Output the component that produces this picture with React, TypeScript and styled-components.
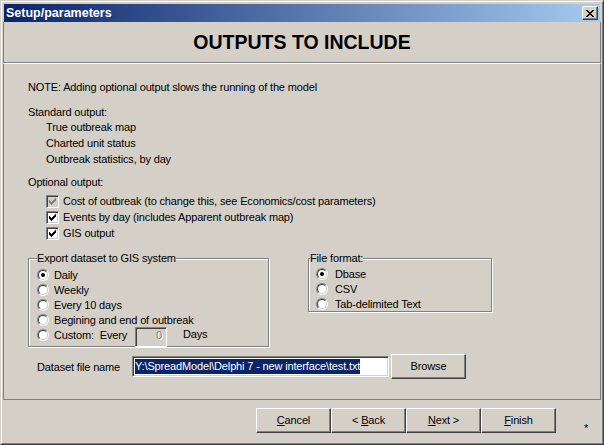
import React from 'react';
import styled, { createGlobalStyle } from 'styled-components';

const Global = createGlobalStyle`
  html, body { margin: 0; padding: 0; background: #d4d0c8; }
  body {
    font-family: "Liberation Sans", Arial, sans-serif;
    font-size: 11px;
    letter-spacing: -0.15px;
    color: #000;
  }
  * { box-sizing: border-box; }
`;

const Window = styled.div`
  width: 604px;
  height: 445px;
  border: 1px solid;
  border-color: #d4d0c8 #404040 #404040 #d4d0c8;
  background: #d4d0c8;
`;

const WindowInner = styled.div`
  height: 100%;
  border: 1px solid;
  border-color: #fff #808080 #808080 #fff;
  padding: 1px;
  display: flex;
  flex-direction: column;
`;

const TitleBar = styled.div`
  margin: 1px 1px 0;
  height: 18px;
  flex: none;
  background: linear-gradient(to right, #0a246a, #a6caf0);
  display: flex;
  align-items: center;
  justify-content: space-between;
  padding: 0 2px 0 2px;
`;

const TitleText = styled.span`
  color: #fff;
  font-weight: bold;
  font-size: 12.5px;
  letter-spacing: 0;
`;

const CloseButton = styled.div`
  width: 16px;
  height: 14px;
  border: 1px solid;
  border-color: #fff #404040 #404040 #fff;
  box-shadow: inset -1px -1px #808080;
  background: #d4d0c8;
  display: flex;
  align-items: center;
  justify-content: center;
  padding-right: 1px;
`;

const Header = styled.div`
  height: 41px;
  flex: none;
  border: 1px solid #808080;
  border-top: none;
  display: flex;
  align-items: center;
  justify-content: center;
`;

const HeaderTitle = styled.h1`
  margin: 0;
  font-size: 19.5px;
  font-weight: bold;
  letter-spacing: 0;
  line-height: 22px;
`;

const Main = styled.div`
  height: 337px;
  flex: none;
  border: 1px solid;
  border-color: #fff #808080 #808080 #808080;
  padding: 16px 24px 0;
  display: flex;
  flex-direction: column;
`;

const Line = styled.div<{ $top?: number; $indent?: number; $lh?: number }>`
  line-height: ${p => p.$lh ?? 14}px;
  margin-top: ${p => p.$top ?? 0}px;
  padding-left: ${p => p.$indent ?? 0}px;
  white-space: nowrap;
`;

const CheckRow = styled.div<{ $top?: number }>`
  height: 16px;
  margin-top: ${p => p.$top ?? 0}px;
  padding-left: 18px;
  display: flex;
  align-items: center;
  gap: 4px;
  white-space: nowrap;
`;

const CheckBoxFrame = styled.span<{ $disabled?: boolean }>`
  width: 13px;
  height: 13px;
  flex: none;
  border: 1px solid;
  border-color: #808080 #fff #fff #808080;
  box-shadow: inset 1px 1px #404040, inset -1px -1px #d4d0c8;
  background: ${p => (p.$disabled ? '#d4d0c8' : '#fff')};
  display: block;
`;

const checkCols: Array<[number, number]> = [
  [3, 5], [4, 6], [5, 7], [6, 6], [7, 5], [8, 4], [9, 3],
];

const CheckBox: React.FC<{ disabled?: boolean }> = ({ disabled }) => (
  <CheckBoxFrame $disabled={disabled}>
    <svg width="11" height="11" viewBox="0 0 11 11" style={{ display: 'block' }}>
      {checkCols.map(([c, t]) => (
        <rect key={c} x={c - 1} y={t - 1} width="1" height="3" fill={disabled ? '#808080' : '#000'} />
      ))}
    </svg>
  </CheckBoxFrame>
);

const GroupsRow = styled.div`
  display: flex;
  align-items: flex-start;
  margin-top: 17px;
`;

const GroupBox = styled.div<{ $w: number; $h: number; $ml?: number }>`
  width: ${p => p.$w}px;
  height: ${p => p.$h}px;
  margin-left: ${p => p.$ml ?? 0}px;
  flex: none;
  border: 1px solid #808080;
  box-shadow: inset 1px 1px #fff, 1px 1px #fff;
  display: flex;
  flex-direction: column;
  align-items: flex-start;
`;

const Legend = styled.div<{ $ml: number }>`
  margin-top: -8px;
  margin-left: ${p => p.$ml}px;
  line-height: 14px;
  background: #d4d0c8;
  white-space: nowrap;
`;

const RadioList = styled.div<{ $top: number }>`
  margin-top: ${p => p.$top}px;
  display: flex;
  flex-direction: column;
`;

const RadioRow = styled.div<{ $pad: number; $gap: number }>`
  height: 15px;
  padding-left: ${p => p.$pad}px;
  display: flex;
  align-items: center;
  gap: ${p => p.$gap}px;
  white-space: nowrap;
`;

const RadioOuter = styled.span`
  width: 12px;
  height: 12px;
  flex: none;
  border-radius: 50%;
  border: 1px solid;
  border-color: #808080 #fff #fff #808080;
  display: flex;
`;

const RadioInner = styled.span`
  flex: 1;
  border-radius: 50%;
  border: 1px solid;
  border-color: #404040 #d4d0c8 #d4d0c8 #404040;
  background: #fff;
  display: flex;
  align-items: center;
  justify-content: center;
`;

const RadioDot = styled.span`
  width: 4px;
  height: 4px;
  border-radius: 50%;
  background: #000;
`;

const Radio: React.FC<{ checked?: boolean }> = ({ checked }) => (
  <RadioOuter>
    <RadioInner>{checked && <RadioDot />}</RadioInner>
  </RadioOuter>
);

const CustomRow = styled.div`
  height: 15px;
  padding-left: 8px;
  display: flex;
  align-items: flex-start;
`;

const CustomLabel = styled.span`
  width: 98px;
  display: flex;
  align-items: center;
  gap: 5px;
  height: 15px;
  white-space: pre;
`;

const DaysInput = styled.div`
  width: 32px;
  height: 20px;
  flex: none;
  border: 1px solid;
  border-color: #808080 #fff #fff #808080;
  box-shadow: inset 1px 1px #404040, inset -1px -1px #d4d0c8;
  background: #d4d0c8;
  color: #808080;
  text-shadow: 1px 1px #fff;
  text-align: right;
  padding: 1px 4px 0 0;
  line-height: 12px;
`;

const DaysLabel = styled.span`
  margin-left: 16px;
  line-height: 15px;
`;

const DatasetRow = styled.div`
  margin-top: 7px;
  height: 25px;
  display: flex;
  align-items: center;
`;

const DatasetLabel = styled.span`
  width: 95px;
  margin-left: 9px;
  white-space: nowrap;
`;

const TextInput = styled.div`
  width: 257px;
  height: 21px;
  border: 1px solid;
  border-color: #808080 #fff #fff #808080;
  box-shadow: inset 1px 1px #404040, inset -1px -1px #d4d0c8;
  background: #fff;
  padding: 2px 0 0 2px;
  white-space: nowrap;
  overflow: hidden;
`;

const Selected = styled.span`
  background: #0a246a;
  color: #fff;
  line-height: 15px;
  display: inline-block;
`;

const Button = styled.div<{ $ml?: number }>`
  width: 75px;
  height: 25px;
  flex: none;
  margin-left: ${p => p.$ml ?? 0}px;
  border: 1px solid;
  border-color: #fff #404040 #404040 #fff;
  box-shadow: inset -1px -1px #808080;
  background: #d4d0c8;
  display: flex;
  align-items: center;
  justify-content: center;
  white-space: nowrap;
  padding-bottom: 1px;
`;

const Footer = styled.div`
  flex: 1;
  display: flex;
  align-items: flex-start;
  padding: 8px 0 0 253px;
`;

const Asterisk = styled.span`
  margin: 14px 0 0 28px;
  line-height: 13px;
`;

const closePixels = [
  [0, 0], [1, 0], [6, 0], [7, 0],
  [1, 1], [2, 1], [5, 1], [6, 1],
  [2, 2], [3, 2], [4, 2], [5, 2],
  [3, 3], [4, 3],
  [2, 4], [3, 4], [4, 4], [5, 4],
  [1, 5], [2, 5], [5, 5], [6, 5],
  [0, 6], [1, 6], [6, 6], [7, 6],
];

const CloseGlyph = () => (
  <svg width="8" height="7" viewBox="0 0 8 7" style={{ display: 'block' }}>
    {closePixels.map(([x, y]) => (
      <rect key={`${x}-${y}`} x={x} y={y} width="1" height="1" fill="#000" />
    ))}
  </svg>
);

export default function App() {
  return (
    <>
      <Global />
      <Window>
        <WindowInner>
          <TitleBar>
            <TitleText>Setup/parameters</TitleText>
            <CloseButton>
              <CloseGlyph />
            </CloseButton>
          </TitleBar>
          <Header>
            <HeaderTitle>OUTPUTS TO INCLUDE</HeaderTitle>
          </Header>
          <Main>
            <Line>NOTE: Adding optional output slows the running of the model</Line>
            <Line $top={11}>Standard output:</Line>
            <Line $indent={18} $lh={16}>True outbreak map</Line>
            <Line $indent={18} $lh={16}>Charted unit status</Line>
            <Line $indent={18} $lh={16}>Outbreak statistics, by day</Line>
            <Line $top={8}>Optional output:</Line>
            <CheckRow $top={4}>
              <CheckBox disabled />
              <span>Cost of outbreak (to change this, see Economics/cost parameters)</span>
            </CheckRow>
            <CheckRow>
              <CheckBox />
              <span>Events by day (includes Apparent outbreak map)</span>
            </CheckRow>
            <CheckRow>
              <CheckBox />
              <span>GIS output</span>
            </CheckRow>
            <GroupsRow>
              <GroupBox $w={241} $h={89}>
                <Legend $ml={8}>Export dataset to GIS system</Legend>
                <RadioList $top={2}>
                  <RadioRow $pad={8} $gap={5}><Radio checked /><span>Daily</span></RadioRow>
                  <RadioRow $pad={8} $gap={5}><Radio /><span>Weekly</span></RadioRow>
                  <RadioRow $pad={8} $gap={5}><Radio /><span>Every 10 days</span></RadioRow>
                  <RadioRow $pad={8} $gap={5}><Radio /><span>Begining and end of outbreak</span></RadioRow>
                  <CustomRow>
                    <CustomLabel><Radio /><span>Custom:  Every</span></CustomLabel>
                    <DaysInput>0</DaysInput>
                    <DaysLabel>Days</DaysLabel>
                  </CustomRow>
                </RadioList>
              </GroupBox>
              <GroupBox $w={184} $h={54} $ml={39}>
                <Legend $ml={1}>File format:</Legend>
                <RadioList $top={1}>
                  <RadioRow $pad={7} $gap={7}><Radio checked /><span>Dbase</span></RadioRow>
                  <RadioRow $pad={7} $gap={7}><Radio /><span>CSV</span></RadioRow>
                  <RadioRow $pad={7} $gap={7}><Radio /><span>Tab-delimited Text</span></RadioRow>
                </RadioList>
              </GroupBox>
            </GroupsRow>
            <DatasetRow>
              <DatasetLabel>Dataset file name</DatasetLabel>
              <TextInput>
                <Selected>Y:\SpreadModel\Delphi 7 - new interface\test.txt</Selected>
              </TextInput>
              <Button $ml={2}>Browse</Button>
            </DatasetRow>
          </Main>
          <Footer>
            <Button><span><u>C</u>ancel</span></Button>
            <Button><span>&lt; <u>B</u>ack</span></Button>
            <Button><span><u>N</u>ext &gt;</span></Button>
            <Button><span><u>F</u>inish</span></Button>
            <Asterisk>*</Asterisk>
          </Footer>
        </WindowInner>
      </Window>
    </>
  );
}
